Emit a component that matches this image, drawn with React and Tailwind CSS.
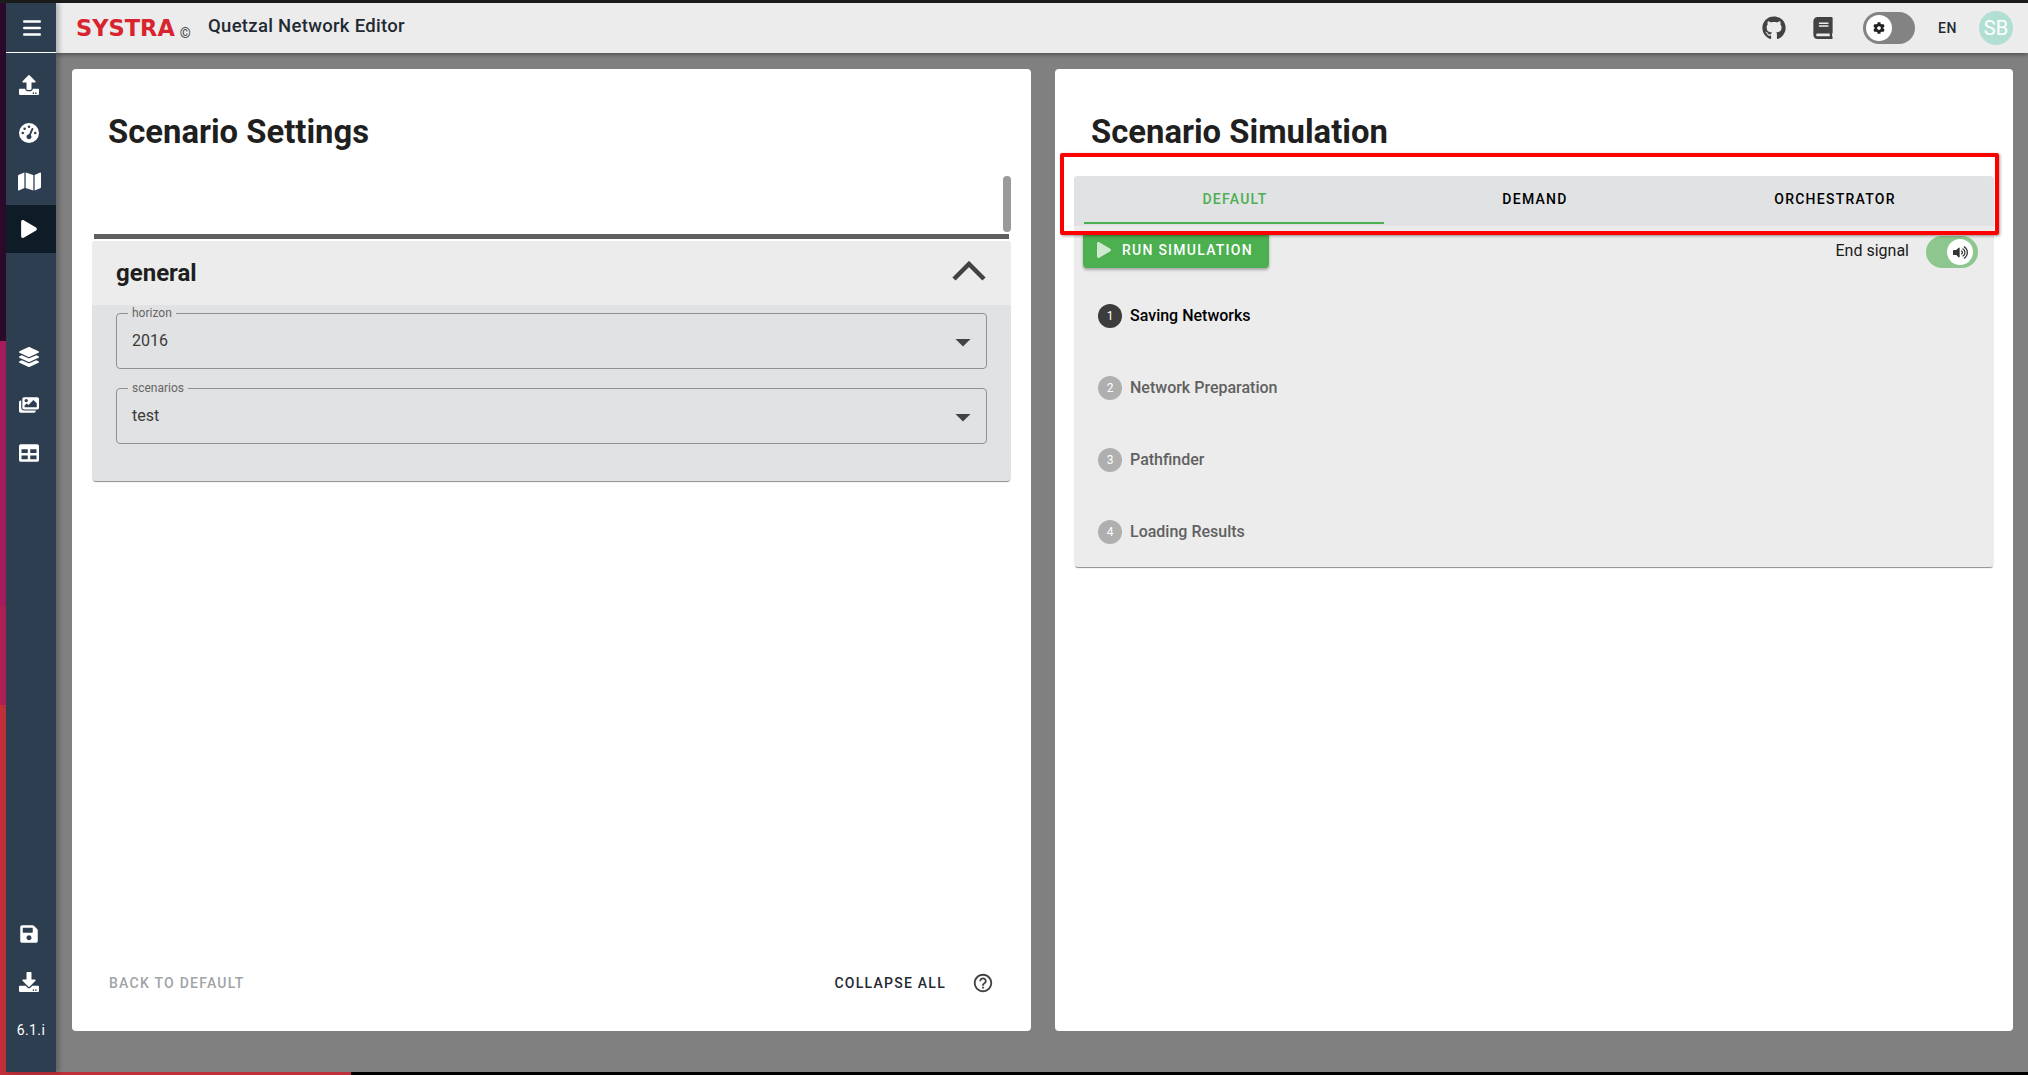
import React from 'react';
import {
  FaUpload, FaMap, FaPlay, FaLayerGroup, FaImages, FaTable,
  FaSave, FaDownload, FaGithub, FaBook, FaCog, FaVolumeUp,
} from 'react-icons/fa';
import { FaGaugeHigh } from 'react-icons/fa6';
import { MdHelpOutline, MdArrowDropDown } from 'react-icons/md';

const roboto = { fontFamily: 'Roboto, sans-serif' };

function NavItem({ icon: Icon, active, size = 20 }) {
  return (
    <div className={`h-12 flex items-center justify-center pr-[4px] text-white ${active ? 'bg-[#0e1c28]' : ''}`}>
      <Icon size={size} />
    </div>
  );
}

function Sidebar() {
  return (
    <aside className="w-[50px] shrink-0 bg-[#2c3e50] flex flex-col z-20 shadow-[3px_0_5px_rgba(0,0,0,0.25)]">
      <div className="h-[50px] shrink-0 flex items-center justify-center pl-[2px] border-b border-white">
        <svg width="18" height="16" viewBox="0 0 18 16" fill="none" stroke="#fff" strokeWidth="2.4" strokeLinecap="round">
          <line x1="1.2" y1="1.5" x2="16.8" y2="1.5" />
          <line x1="1.2" y1="8" x2="16.8" y2="8" />
          <line x1="1.2" y1="14.5" x2="16.8" y2="14.5" />
        </svg>
      </div>
      <div className="mt-[8px] flex flex-col">
        <NavItem icon={FaUpload} />
        <NavItem icon={FaGaugeHigh} />
        <NavItem icon={FaMap} size={23} />
        <NavItem icon={FaPlay} active size={18} />
      </div>
      <div className="mt-[80px] flex flex-col">
        <NavItem icon={FaLayerGroup} />
        <NavItem icon={FaImages} />
        <NavItem icon={FaTable} />
      </div>
      <div className="mt-auto flex flex-col pb-[18px]">
        <NavItem icon={FaSave} />
        <NavItem icon={FaDownload} />
        <div className="h-12 flex items-center justify-center text-white text-[14px] tracking-[0.4px]">6.1.i</div>
      </div>
    </aside>
  );
}

function Header() {
  return (
    <header className="h-[50px] shrink-0 bg-[#ececec] flex items-center z-10 shadow-[0_2px_4px_rgba(0,0,0,0.35)]">
      <div className="ml-5 flex items-end w-[132px]">
        <span className="text-[#d9232e] font-bold text-[22.5px] leading-[26px]" style={{ fontFamily: '"DejaVu Sans", sans-serif' }}>SYSTRA</span>
        <span className="ml-[5px] text-[14px] leading-[16px] text-[#444]">©</span>
      </div>
      <span className="-mt-[2px] text-[18.5px] font-medium text-[#1f2a33] tracking-[0.3px]">Quetzal Network Editor</span>
      <div className="ml-auto flex items-center text-[#424242]">
        <FaGithub size={24} />
        <FaBook size={22} className="ml-[26px]" />
        <div className="ml-[29px] w-[52px] h-8 rounded-full bg-[#838383] flex items-center pl-[3px]">
          <div className="w-[26px] h-[26px] rounded-full bg-white flex items-center justify-center text-[#222]">
            <FaCog size={12} />
          </div>
        </div>
        <span className="ml-[23px] text-[14px] font-medium text-[#1f2a33] tracking-[0.6px]">EN</span>
        <div className="ml-[22px] mr-[15px] w-[34px] h-[34px] rounded-full bg-[#b2dfd3] text-white text-[20px] flex items-center justify-center">SB</div>
      </div>
    </header>
  );
}

function SelectField({ label, value }) {
  return (
    <div className="relative h-14 border border-[#8f9092] rounded-[4px] flex items-start justify-between pl-[15px] pr-[14px] pt-[17px]">
      <span className="absolute -top-[8px] left-[11px] px-1 bg-[#e1e2e4] text-[12px] leading-[14px] text-[#666]">{label}</span>
      <span className="text-[16px] leading-5 text-[#3a3a3a]">{value}</span>
      <MdArrowDropDown size={36} className="text-[#424242] -mt-[7px] -mr-[9px]" />
    </div>
  );
}

function LeftCard() {
  return (
    <section className="w-[959px] bg-white rounded-[4px] flex flex-col">
      <h1 className="ml-9 mt-[43px] text-[32.8px] leading-10 font-bold text-[#1f1f1f]">Scenario Settings</h1>
      <div className="relative mt-[24px] ml-5 mr-5 pt-[58px]">
        <div className="absolute right-0 top-0 w-[8px] h-[56px] rounded-full bg-[#9a9a9a]" />
        <div className="mx-[2px] h-[5px] bg-[#5f5f5f]" />
        <div className="mt-[2px] rounded-[4px] bg-[#e1e2e4] shadow-[0_2px_1px_-1px_rgba(0,0,0,0.45)]">
          <div className="h-16 bg-[#ececec] rounded-t-[4px] flex items-center justify-between pl-6 pr-[25px]">
            <span className="text-[24px] font-bold text-[#1f1f1f]">general</span>
            <svg width="34" height="20" viewBox="0 0 34 20" fill="none" stroke="#424242" strokeWidth="4.5" className="-mt-[4px]"><polyline points="2,18 17,3 32,18" /></svg>
          </div>
          <div className="px-6 pt-2 pb-[37px] flex flex-col gap-[19px]">
            <SelectField label="horizon" value="2016" />
            <SelectField label="scenarios" value="test" />
          </div>
        </div>
      </div>
      <div className="mt-auto mb-[38px] ml-[37px] mr-[37px] flex items-center text-[14px] font-medium tracking-[1.25px] h-5">
        <span className="text-[#a0a4a6]">BACK TO DEFAULT</span>
        <span className="ml-auto text-[#1f2a33]">COLLAPSE ALL</span>
        <MdHelpOutline size={22} className="ml-[26px] text-[#424242]" />
      </div>
    </section>
  );
}

function Step({ n, label, active }) {
  return (
    <div className="h-6 flex items-center">
      <div className={`w-6 h-6 rounded-full text-white text-[12px] flex items-center justify-center ${active ? 'bg-[#3c3c3c]' : 'bg-[#afafaf]'}`}>{n}</div>
      <span className={`ml-2 text-[16px] font-medium ${active ? 'text-black' : 'text-[#616161]'}`}>{label}</span>
    </div>
  );
}

function RightCard() {
  return (
    <section className="relative w-[958px] bg-white rounded-[4px] flex flex-col">
      <h1 className="ml-9 mt-[43px] text-[32.8px] leading-10 font-bold text-[#1f1f1f]">Scenario Simulation</h1>
      <div className="mt-[24px] mx-[19px] rounded-[4px] overflow-hidden bg-[#ececec] shadow-[0_2px_1px_-1px_rgba(0,0,0,0.45)] h-[391px] flex flex-col">
        <div className="h-[50px] shrink-0 bg-[#e1e2e4] px-[10px] flex text-[14px] font-medium tracking-[1.25px]">
          <div className="w-[300px] h-[48px] pl-[2px] pt-[1px] flex items-center justify-center border-b-2 border-[#4caf50] text-[#4caf50]">DEFAULT</div>
          <div className="w-[300px] h-[48px] pl-[2px] pt-[1px] flex items-center justify-center border-b-2 border-transparent text-black">DEMAND</div>
          <div className="w-[300px] h-[48px] pl-[2px] pt-[1px] flex items-center justify-center border-b-2 border-transparent text-black">ORCHESTRATOR</div>
        </div>
        <div className="h-[42px] mt-[3px] shrink-0 pl-[9px] pr-[16px] flex items-center justify-between">
          <div className="w-[186px] h-9 bg-[#4caf50] rounded-[4px] shadow-[0_2px_3px_rgba(0,0,0,0.3)] flex items-center pl-[13px] text-white text-[14px] font-medium tracking-[1.25px]">
            <FaPlay size={16} className="text-[#cfe9d0]" />
            <span className="ml-[10px]">RUN SIMULATION</span>
          </div>
          <div className="flex items-center mt-[4px]">
            <span className="-mt-[2px] text-[16px] text-[#1a1a1a]">End signal</span>
            <div className="ml-[17px] w-[52px] h-8 rounded-full bg-[#8dc68f] flex items-center justify-end pr-[5px]">
              <div className="w-[26px] h-[26px] rounded-full bg-white flex items-center justify-center text-[#333]">
                <FaVolumeUp size={15} />
              </div>
            </div>
          </div>
        </div>
        <div className="mt-[33px] pl-6 flex flex-col gap-12">
          <Step n="1" label="Saving Networks" active />
          <Step n="2" label="Network Preparation" />
          <Step n="3" label="Pathfinder" />
          <Step n="4" label="Loading Results" />
        </div>
      </div>
      {/* annotation box over the tabs */}
      <div className="absolute left-[5px] top-[84px] w-[939px] h-[82px] border-4 border-[#ff0000] rounded-[2px] shadow-[1px_1px_3px_rgba(0,0,0,0.4)] pointer-events-none" />
    </section>
  );
}

export default function App() {
  return (
    <div className="w-[2028px] h-[1075px] bg-black flex flex-col overflow-hidden" style={roboto}>
      <div className="h-[3px] shrink-0 bg-[#1c1c1c]" />
      <div className="h-[1069px] shrink-0 flex">
        <div className="w-[6px] shrink-0 bg-[linear-gradient(180deg,#2c0a2c_0,#2c0a2c_338px,#a51c5c_338px,#a51c5c_603px,#ad1f55_603px,#ad1f55_702px,#c0303a_702px,#c0303a_100%)]" />
        <Sidebar />
        <div className="flex-1 min-w-0 flex flex-col bg-[#808080]">
          <Header />
          <main className="flex-1 min-h-0 flex gap-6 pl-4 pt-4 pb-[41px]">
            <LeftCard />
            <RightCard />
          </main>
        </div>
      </div>
      <div className="h-[3px] shrink-0 flex">
        <div className="w-[351px] bg-[#c0303a]" />
      </div>
    </div>
  );
}
